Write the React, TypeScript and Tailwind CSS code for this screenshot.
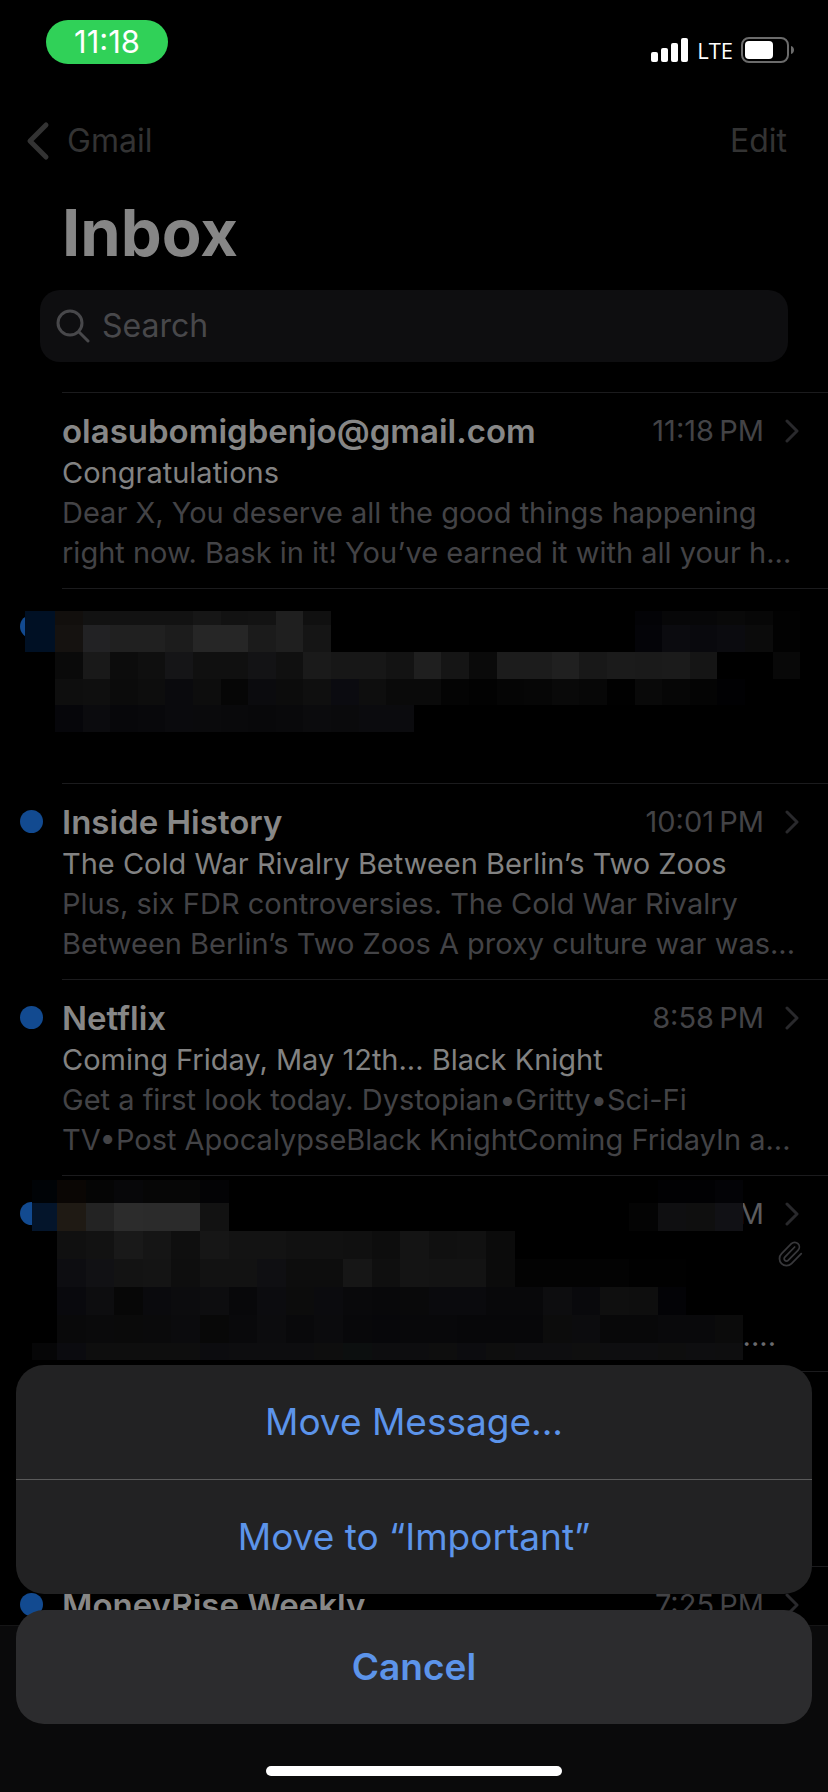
import { Paperclip } from "lucide-react";

type Mail = {
  from: string;
  time: string;
  subject: string;
  preview: string[];
  unread?: boolean;
};

type Band = { y: number; h: number; cells: string };

const congrats: Mail = {
  from: "olasubomigbenjo@gmail.com",
  time: "11:18\u2009PM",
  subject: "Congratulations",
  preview: [
    "Dear X, You deserve all the good things happening",
    "right now. Bask in it! You’ve earned it with all your h...",
  ],
};

const history: Mail = {
  from: "Inside History",
  time: "10:01\u2009PM",
  subject: "The Cold War Rivalry Between Berlin’s Two Zoos",
  preview: [
    "Plus, six FDR controversies. The Cold War Rivalry",
    "Between Berlin’s Two Zoos A proxy culture war was...",
  ],
  unread: true,
};

const netflix: Mail = {
  from: "Netflix",
  time: "8:58\u2009PM",
  subject: "Coming Friday, May 12th... Black Knight",
  preview: [
    "Get a first look today. Dystopian•Gritty•Sci-Fi",
    "TV•Post ApocalypseBlack KnightComing FridayIn a...",
  ],
  unread: true,
};

const moneyRise: Mail = {
  from: "MoneyRise Weekly",
  time: "7:25\u2009PM",
  subject: "",
  preview: [],
  unread: true,
};

// Each band is one line of censor blocks, "-" leaves a block out
const firstMosaic: Band[] = [
  { y: 23, h: 14, cells: "120f0d 121212 121212 121212 121212 161616 121212 131313 1f1f1f 101010 - - - - - - - - - - - 030306 070708 070708 090909 070707 020202" },
  { y: 37, h: 27, cells: "151210 222224 202020 202020 1c1c1c 262626 262626 1b1b1b 1f1f1f 151515 - - - - - - - - - - - 040408 0b0b0f 09090d 0b0b0f 0b0b0b 020202" },
  { y: 64, h: 27, cells: "0a0a0a 191919 0c0c0c 0f0f0f 151517 101010 101010 131315 101010 1a1a1a 171717 171717 131313 1f1f1f 151515 0a0a0a 1c1c1c 1c1c1c 202020 181818 1b1b1b 1a1a1a 1b1b1b 151515 - - 080808" },
  { y: 91, h: 27, cells: "0e0e0e 0f0f0f 0b0b0b 0d0d0d 0a0a0d 0d0d0d 060606 0b0b0e 0c0c0c 0f0f0f 0b0b10 0e0e0e 0a0a0a 0a0a0a 040404 020202 050505 060606 090909 070707 010101 090909 060606 040404 010103" },
  { y: 118, h: 27, cells: "06060a 0b0b0e 07070a 08080b 0a0a0d 0a0a0c 09090b 08080a 09090b 0b0b0d 0a0a0c 0b0b0e 0b0b0e" },
];

const secondMosaic: Band[] = [
  { y: 5, h: 23, cells: "0a0604 050505 070709 060606 060606 030305 - - - - - - - - - - - - - - - 010103 010103 030306" },
  { y: 28, h: 28, cells: "1f1a14 232323 2c2c2c 2b2b2b 2b2b2b 121212 - - - - - - - - - - - - - - 040404 0f0f11 0f0f0f 111115" },
  { y: 56, h: 28, cells: "101010 121212 191919 151515 0f0f0f 161616 131313 131313 111111 111111 101010 0d0d0d 141414 101010 111111 0b0b0b" },
  { y: 84, h: 28, cells: "0d0d11 111114 131313 141414 0e0e0e 121212 121212 0f0f12 0d0d0d 0d0d0d 161616 0f0f0f 141414 131313 131313 0b0b0b 030303 030303 030303 030303 010101 010101" },
  { y: 112, h: 28, cells: "09090d 0d0d0f 070707 0a0a0d 0c0c0e 0d0d0f 08080a 0c0c0f 0c0c0c 0b0b0e 09090b 08080a 09090a 0a0a0d 0a0a0d 08080a 08080a 0d0d0f 09090c 0f0f0f 0e0e0e 030306" },
  { y: 140, h: 28, cells: "09090a 0a0a0b 0a0a0a 0a0a0b 0b0b0d 080808 09090b 0c0c0e 09090b 0b0b0d 08080a 07070a 08080a 08080a 070709 070709 070709 0c0c0c 0c0c0e 080809 080809 09090b 09090b 0b0b0b" },
  { y: 168, h: 17, cells: "0b0b0f 0e0e0e 0e0e0e 0e0e0e 0e0e0e 0c0c0f 0d0d0f 0d0d0f 0d0d0f 0e0e0e 0c0f0f 0d0d0f 0d0d0f 0e0e0e 0c0c0f 0e0e0e 0e0e10 0e0e10 0f0f0f 0e0e10 0e0e10 0e0e0e 0e0e10 0e0e0f" },
];

function Mosaic({ bands, left, cell, blue }: { bands: Band[]; left: number; cell: number; blue: { x: number; y: number; h: number; fill: string }[] }) {
  return (
    <svg
      className="absolute inset-0 h-full w-full"
      viewBox="0 0 828 196"
      preserveAspectRatio="none"
      shapeRendering="crispEdges"
      aria-hidden="true"
    >
      {blue.map((b) => (
        <rect key={b.y} x={b.x} y={b.y} width={left - b.x} height={b.h} fill={b.fill} />
      ))}
      {bands.map((band) =>
        band.cells.split(" ").map((c, i) =>
          c === "-" ? null : (
            <rect key={`${band.y}-${i}`} x={left + i * cell} y={band.y} width={cell} height={band.h} fill={`#${c}`} />
          )
        )
      )}
    </svg>
  );
}

function Chevron() {
  return (
    <svg className="h-6 w-4 shrink-0" viewBox="0 0 16 24" fill="none" stroke="#29292c" strokeWidth="3" strokeLinecap="round" strokeLinejoin="round">
      <path d="M3 2l10 10L3 22" />
    </svg>
  );
}

function UnreadDot() {
  return <span className="absolute left-5 top-[27px] h-[23px] w-[23px] rounded-full bg-[#124a90]" />;
}

function MailRow({ mail }: { mail: Mail }) {
  return (
    <li className="relative">
      {mail.unread && <UnreadDot />}
      <a href="#" className="ml-[62px] block border-t border-[#1b1b1d] pb-[15px] pr-7 pt-4">
        <div className="flex h-11 items-center justify-between">
          <span className="text-[33px] font-semibold leading-10 text-[#878787]">{mail.from}</span>
          <span className="flex items-center gap-5">
            <time className="text-[29px] leading-10 text-[#434346]">{mail.time}</time>
            <Chevron />
          </span>
        </div>
        <p className="h-10 text-[29px] leading-10 text-[#828282]">{mail.subject}</p>
        <p className="h-20 whitespace-nowrap text-[29px] leading-10 text-[#434346]">
          {mail.preview.map((line) => (
            <span key={line} className="block">
              {line}
            </span>
          ))}
        </p>
      </a>
    </li>
  );
}

function StatusBar() {
  return (
    <div className="flex items-start justify-between pl-[46px] pr-[33px] pt-5">
      <span className="flex h-11 w-[122px] items-center justify-center rounded-full bg-[#30d158] text-[31px] text-white">
        11:18
      </span>
      <div className="mt-4 flex h-7 items-center gap-2 text-white">
        <svg className="h-6 w-[38px]" viewBox="0 0 38 24" fill="currentColor" aria-label="Signal">
          <rect x="0" y="14" width="7" height="10" rx="2" />
          <rect x="10" y="10" width="7" height="14" rx="2" />
          <rect x="20" y="5" width="7" height="19" rx="2" />
          <rect x="30" y="0" width="7" height="24" rx="2" />
        </svg>
        <span className="font-['Open_Sans',sans-serif] text-[22px] font-medium leading-7">LTE</span>
        <svg className="h-[26px] w-[54px]" viewBox="0 0 54 26" aria-label="Battery">
          <rect x="1" y="1" width="46" height="24" rx="7" fill="none" stroke="#6b6b6b" strokeWidth="2" />
          <rect x="4" y="4" width="28" height="18" rx="4" fill="#fff" />
          <path d="M50 9c4 1 4 7 0 8z" fill="#6b6b6b" />
        </svg>
      </div>
    </div>
  );
}

export default function App() {
  return (
    <div className="relative flex min-h-screen flex-col overflow-hidden bg-black font-['Inter','Liberation_Sans',sans-serif]">
      <StatusBar />

      <nav className="mt-[53px] flex h-12 items-center justify-between pl-6 pr-[41px] text-[32px] text-[#333333]">
        <button className="flex items-center gap-4">
          <svg className="h-10 w-[27px]" viewBox="0 0 27 40" fill="none" stroke="currentColor" strokeWidth="5" strokeLinecap="round" strokeLinejoin="round">
            <path d="M22 4L6 20l16 16" />
          </svg>
          Gmail
        </button>
        <button>Edit</button>
      </nav>

      <h1 className="ml-[62px] mt-7 text-[65px] font-bold leading-[80px] text-[#868686]">Inbox</h1>

      <label className="mx-10 mt-[17px] flex h-[72px] items-center gap-3 rounded-[20px] bg-[#0e0e10] px-4">
        <svg className="h-[34px] w-[34px] shrink-0" viewBox="0 0 34 34" fill="none" stroke="#48484b" strokeWidth="3" strokeLinecap="round">
          <circle cx="14" cy="14" r="12" />
          <path d="M23 23l9 9" />
        </svg>
        <input
          type="search"
          aria-label="Search"
          placeholder="Search"
          className="min-w-0 flex-1 bg-transparent text-[32px] text-[#48484b] outline-none placeholder:text-[#48484b]"
        />
      </label>

      <ul className="mt-[30px]">
        <MailRow mail={congrats} />

        <li className="relative h-[195px]">
          <UnreadDot />
          <div className="ml-[62px] border-t border-[#1b1b1d]" />
          <Mosaic
            bands={firstMosaic}
            left={55}
            cell={27.6}
            blue={[{ x: 25, y: 23, h: 41, fill: "#001024" }]}
          />
        </li>

        <MailRow mail={history} />
        <MailRow mail={netflix} />

        <li className="relative h-[196px]">
          <UnreadDot />
          <div className="ml-[62px] border-t border-[#1b1b1d] pr-7 pt-4">
            <div className="flex h-11 items-center justify-end gap-5">
              <span className="text-[29px] leading-10 text-[#5c5c5f]">M</span>
              <Chevron />
            </div>
            <div className="-mr-1 flex h-10 justify-end">
              <Paperclip className="mt-1 h-7 w-7 text-[#38383b]" strokeWidth={1.5} />
            </div>
            <p className="mt-10 pr-6 text-right text-[29px] leading-10 text-[#6a6a6d]">....</p>
          </div>
          <Mosaic
            bands={secondMosaic}
            left={57}
            cell={28.6}
            blue={[
              { x: 32, y: 5, h: 23, fill: "#000306" },
              { x: 32, y: 28, h: 28, fill: "#04152b" },
              { x: 32, y: 168, h: 17, fill: "#060607" },
            ]}
          />
        </li>

        <li className="h-[195px]">
          <div className="ml-[62px] border-t border-[#1b1b1d]" />
        </li>

        <MailRow mail={moneyRise} />
      </ul>

      {/* Bottom toolbar */}
      <div className="absolute inset-x-0 bottom-0 h-[167px] border-t border-[#151516] bg-[#0a0a0b]" />

      {/* Action sheet */}
      <div role="dialog" aria-label="Move message" className="absolute inset-x-0 bottom-0 flex flex-col px-4 pb-4 text-[37px] text-[#5c94ea]">
        <div className="flex flex-col overflow-hidden rounded-[28px] bg-[#222223]">
          <button className="h-[114px]">Move Message...</button>
          <button className="h-[115px] border-t border-[#5a5a5a]">Move to “Important”</button>
        </div>
        <button className="mt-4 h-[114px] rounded-[28px] bg-[#2c2c2e] font-semibold">Cancel</button>
        <div className="mx-auto mt-[42px] h-[10px] w-[296px] rounded-full bg-white" />
      </div>
    </div>
  );
}
